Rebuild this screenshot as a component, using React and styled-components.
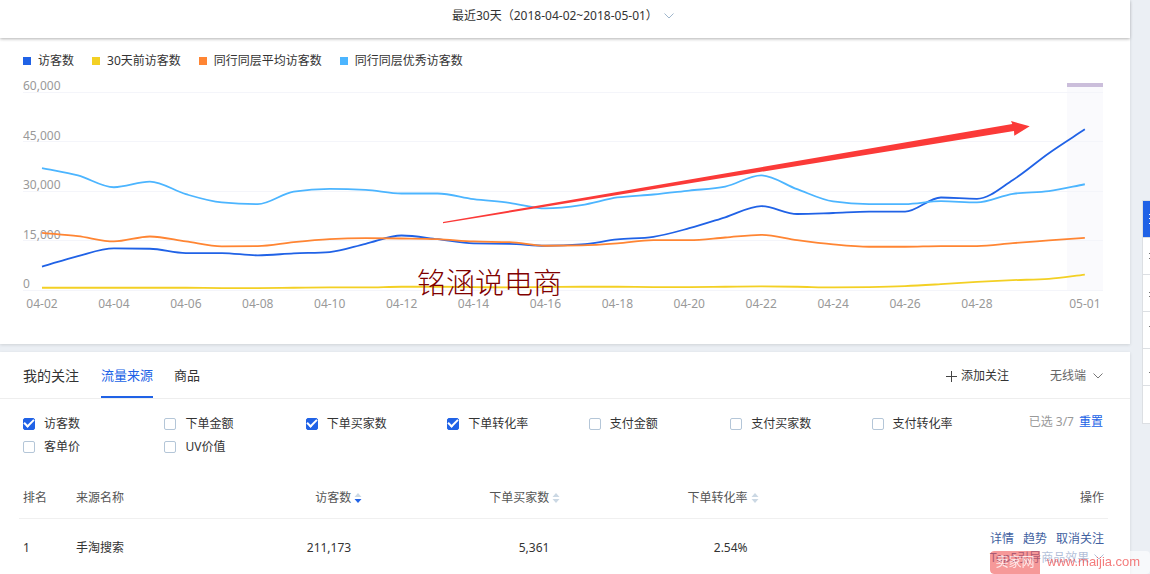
import React, { useState } from "react";
import styled, { createGlobalStyle } from "styled-components";

const GlobalStyle = createGlobalStyle`
    * {
        box-sizing: border-box;
    }

    body {
        margin: 0;
        background-color: #ebeff4;
        color: #333;
        font-family: "Noto Sans", "Noto Sans CJK SC", sans-serif;
        font-size: 12px;
        line-height: 18px;
    }

    button, select, input {
        font: inherit;
        color: inherit;
    }

    button {
        border: 0;
        padding: 0;
        background: none;
        cursor: pointer;
    }
`;

const Page = styled.div`
    display: flex;
    flex-direction: column;
    min-height: 100vh;
    padding-right: 20px;
`;

const TopBar = styled.header`
    display: flex;
    justify-content: center;
    align-items: center;
    height: 38px;
    padding: 0 4px 6px 0;
    background-color: #fff;
    box-shadow: 0 1px 3px rgba(0, 0, 0, 0.3);
    z-index: 1;
`;

const Panel = styled.section`
    background-color: #fff;
    box-shadow: 0 1px 3px rgba(0, 0, 0, 0.12);
`;

const ChartPanel = styled(Panel)`
    position: relative;
    margin-bottom: 8px;
    padding: 14px 0 24px;
`;

const SourcePanel = styled(Panel)`
    flex: 1;
`;

const SelectWrap = styled.label`
    display: flex;
    align-items: center;
    gap: 6px;
    color: ${(props) => (props.$muted ? "#666" : "#333")};
`;

const PlainSelect = styled.select`
    appearance: none;
    border: 0;
    padding: 0;
    background: none;
    cursor: pointer;
`;

const Legend = styled.ul`
    display: flex;
    gap: 18px;
    margin: 0;
    padding: 0 23px;
    list-style: none;
`;

const LegendItem = styled.li`
    display: flex;
    align-items: center;
    gap: 7px;

    &::before {
        content: "";
        width: 8px;
        height: 8px;
        background-color: ${(props) => props.$color};
    }
`;

const ChartSvg = styled.svg`
    display: block;
    width: 100%;
    margin-top: 5px;

    text {
        fill: #999;
        font-size: 12px;
    }
`;

const AuthorMark = styled.div`
    position: absolute;
    left: 37%;
    bottom: 43px;
    margin-left: -1px;
    color: #800000;
    font-family: "Noto Sans CJK SC", sans-serif;
    font-size: 29px;
    font-weight: 300;
    line-height: 40px;
`;

const TabBar = styled.div`
    display: flex;
    align-items: stretch;
    height: 47px;
    padding: 0 27px 0 23px;
    border-bottom: 1px solid #eee;
`;

const PanelTitle = styled.h2`
    margin: 0 22px 0 0;
    font-size: 14px;
    font-weight: 400;
    line-height: 48px;
`;

const Tab = styled.button`
    margin-right: 21px;
    padding-top: 2px;
    border-bottom: 2px solid ${(props) => (props.$active ? "#2062e6" : "transparent")};
    color: ${(props) => (props.$active ? "#2062e6" : "#333")};
    font-size: 13px;
`;

const TabActions = styled.div`
    display: flex;
    align-items: center;
    gap: 41px;
    margin-left: auto;
    padding-top: 2px;
`;

const AddButton = styled.button`
    display: flex;
    align-items: center;
    gap: 4px;
`;

const Filters = styled.div`
    display: flex;
    padding: 13px 27px 0 23px;
`;

const MetricGrid = styled.div`
    flex: 1;
    display: grid;
    grid-template-columns: repeat(7, 1fr);
    grid-auto-rows: 23px;
`;

const MetricLabel = styled.label`
    display: flex;
    align-items: center;
    gap: 9px;
`;

const Checkbox = styled.input`
    appearance: none;
    display: grid;
    place-items: center;
    width: 12px;
    height: 12px;
    margin: 0;
    border: 1px solid #b4c6d8;
    border-radius: 2px;

    &:checked {
        border-color: #2062e6;
        background-color: #2062e6;
    }

    &:checked::after {
        content: "";
        width: 8px;
        height: 4px;
        margin-bottom: 3px;
        border: solid #fff;
        border-width: 0 0 2px 2px;
        transform: rotate(-45deg);
    }
`;

const Selected = styled.div`
    width: 90px;
    color: #999;
    line-height: 20px;
    text-align: right;
`;

const ResetButton = styled.button`
    margin-left: 5px;
    color: #2062e6;
`;

const SourceTable = styled.table`
    width: calc(100% - 41px);
    margin: 18px 22px 0 19px;
    border-collapse: collapse;
    table-layout: fixed;
`;

const HeadCell = styled.th`
    width: ${(props) => props.$width};
    height: 42px;
    padding: 2px ${(props) => (props.$last ? "4px" : "0")} 0 4px;
    border-bottom: 1px solid #f0f0f0;
    color: #555;
    font-weight: 400;
    text-align: ${(props) => props.$align || "left"};
`;

const SortButton = styled.button`
    display: inline-flex;
    align-items: center;
    gap: 3px;
`;

const Cell = styled.td`
    padding: 10px ${(props) => (props.$number ? "11px" : "4px")} 6px 4px;
    text-align: ${(props) => (props.$number ? "right" : "left")};
`;

const RowActions = styled.div`
    display: flex;
    flex-wrap: wrap;
    justify-content: space-between;
    width: 114px;
    margin-left: auto;
    line-height: 19px;
`;

const RowLink = styled.a`
    display: flex;
    align-items: center;
    gap: 5px;
    color: #3f5f9f;
    text-decoration: none;
    white-space: nowrap;
`;

const SideRail = styled.nav`
    position: fixed;
    top: 200px;
    right: -30px;
    width: 38px;
    border: 1px solid #dcdfe3;
    border-right: 0;
`;

const RailButton = styled.button`
    display: flex;
    align-items: center;
    width: 100%;
    height: 37px;
    padding-left: 6px;
    border-bottom: 1px solid #dcdfe3;
    background-color: ${(props) => (props.$active ? "#2062e6" : "#fff")};
    color: ${(props) => (props.$active ? "#fff" : "#777")};

    &:last-child {
        border-bottom: 0;
    }
`;

const SiteMark = styled.div`
    position: fixed;
    right: 0;
    bottom: 0;
    display: flex;
    width: 160px;
    height: 23px;
    border-radius: 4px;
    overflow: hidden;
    color: rgba(240, 80, 80, 0.75);
    font-family: "Liberation Sans", "Noto Sans CJK SC", sans-serif;
    font-size: 13px;
    line-height: 22px;
`;

const SiteName = styled.span`
    width: 50px;
    border-radius: 4px 0 0 4px;
    background-color: rgba(240, 85, 85, 0.6);
    color: rgba(255, 255, 255, 0.8);
    text-align: center;
`;

const SiteUrl = styled.span`
    flex: 1;
    padding-left: 7px;
    background-color: rgba(255, 255, 255, 0.6);
`;

const series = [
    {
        name: "访客数",
        color: "#2062e6",
        data: [
            7200, 10400, 12700, 12600, 11300, 11300, 10600, 11200, 11600, 14100,
            16600, 15500, 14200, 14100, 13500, 13900, 15400, 16200, 18800, 22100,
            25500, 23100, 23400, 23800, 23800, 28100, 27700, 33400, 41500, 48700,
        ],
    },
    {
        name: "30天前访客数",
        color: "#f3d024",
        data: [
            800, 800, 800, 800, 800, 700, 700, 800, 900, 900,
            1100, 1100, 1000, 900, 1000, 1100, 1100, 1000, 1000, 1100,
            1200, 1100, 900, 1000, 1300, 1900, 2600, 3100, 3500, 4800,
        ],
    },
    {
        name: "同行同层平均访客数",
        color: "#ff8533",
        data: [
            17400, 16400, 14800, 16300, 14800, 13300, 13400, 14600, 15500, 15800,
            15700, 15500, 14800, 14600, 13500, 13600, 14200, 15200, 15200, 16000,
            16800, 15200, 13900, 13200, 13200, 13400, 13400, 14300, 15100, 15900,
        ],
    },
    {
        name: "同行同层优秀访客数",
        color: "#4cb5ff",
        data: [
            37000, 34800, 31200, 32900, 29100, 26600, 26100, 29900, 30700, 30400,
            29300, 29300, 27600, 26500, 24800, 25800, 28100, 29000, 30200, 31400,
            34800, 30600, 26900, 26100, 26100, 27000, 26600, 29200, 30000, 32100,
        ],
    },
];

const yTicks = [60000, 45000, 30000, 15000, 0];

const xTicks = [
    "04-02", "04-04", "04-06", "04-08", "04-10", "04-12", "04-14",
    "04-16", "04-18", "04-20", "04-22", "04-24", "04-26", "04-28",
].map((label, i) => ({ label, index: i * 2 })).concat({ label: "05-01", index: 29 });

const metrics = [
    "访客数", "下单金额", "下单买家数", "下单转化率", "支付金额",
    "支付买家数", "支付转化率", "客单价", "UV价值",
];

const railIcons = [
    "M0 2.5h8M0 6.5h8M0 11.5h8M3.5 1v12",
    "M0 4.5h8M0 9.5h8M3.5 1v12",
    "M0 6.5h6M0 10.5h6M4.5 2v10",
    "M0 3.5h8M5.5 4v8",
    "M0 12.5h8M5.5 3v9",
    "",
];

const STEP = 35.96;
const xPos = (i) => 42 + i * STEP;
const yPos = (value) => 215.4 - (value / 60000) * 198.4;

// monotone cubic, so flat stretches do not overshoot
function linePath(data) {
    const ys = data.map(yPos);
    const slopes = ys.slice(1).map((y, i) => y - ys[i]);
    const tangents = ys.map((_, i) => {
        if (i === 0) return slopes[0];
        if (i === ys.length - 1) return slopes[i - 1];
        const a = slopes[i - 1];
        const b = slopes[i];
        if (a * b <= 0) return 0;
        return Math.sign(a) * Math.min(Math.abs(a), Math.abs(b), Math.abs(a + b) / 4) * 2;
    });

    let d = `M${xPos(0)},${ys[0]}`;
    for (let i = 1; i < ys.length; i++) {
        d += `C${xPos(i - 1) + STEP / 3},${ys[i - 1] + tangents[i - 1] / 3}`;
        d += ` ${xPos(i) - STEP / 3},${ys[i] - tangents[i] / 3} ${xPos(i)},${ys[i]}`;
    }
    return d;
}

function Chevron({ color }) {
    return (
        <svg width="10" height="6" viewBox="0 0 10 6" fill="none" stroke={color} aria-hidden="true">
            <path d="M0.5 0.5L5 5L9.5 0.5" />
        </svg>
    );
}

function SortIcon({ active }) {
    return (
        <svg width="8" height="10" viewBox="0 0 8 10" aria-hidden="true">
            <path d="M0.5 4L4 0L7.5 4Z" fill="#cbd8e4" />
            <path d="M0.5 6L4 10L7.5 6Z" fill={active ? "#2062e6" : "#cbd8e4"} />
        </svg>
    );
}

function TrendChart() {
    return (
        <ChartSvg viewBox="0 0 1130 245" role="img" aria-label="访客数">
            <rect x="1067" y="8" width="36" height="207" fill="#fafafd" />
            {yTicks.map((tick) => (
                <line
                    key={tick}
                    x1="23"
                    x2="1103"
                    y1={Math.floor(yPos(tick)) + 0.5}
                    y2={Math.floor(yPos(tick)) + 0.5}
                    stroke="#f4f5fa"
                />
            ))}
            <rect x="1067" y="8" width="36" height="4" fill="#cbbedb" />
            {yTicks.map((tick) => (
                <text key={tick} x="23" y={Math.round(yPos(tick)) - 2}>
                    {tick.toLocaleString("en-US")}
                </text>
            ))}
            {xTicks.map(({ label, index }) => (
                <text key={label} x={xPos(index)} y="233" textAnchor="middle">
                    {label}
                </text>
            ))}
            {series.map(({ name, color, data }) => (
                <path key={name} d={linePath(data)} fill="none" stroke={color} strokeWidth="1.8" />
            ))}
            <path
                d="M443 147L1012.3 49L1011 46L1029.7 51.3L1014.3 60.7L1014 56L443 148.2Z"
                fill="#fb3a38"
            />
        </ChartSvg>
    );
}

function App() {
    const [tab, setTab] = useState("流量来源");
    const [checked, setChecked] = useState(["访客数", "下单买家数", "下单转化率"]);

    const toggle = (name) =>
        setChecked(
            checked.includes(name) ? checked.filter((item) => item !== name) : [...checked, name]
        );

    return (
        <>
            <GlobalStyle />
            <Page>
                <TopBar>
                    <SelectWrap>
                        <PlainSelect aria-label="最近30天">
                            <option>最近30天（2018-04-02~2018-05-01）</option>
                        </PlainSelect>
                        <Chevron color="#9fb6cc" />
                    </SelectWrap>
                </TopBar>
                <ChartPanel>
                    <Legend>
                        {series.map(({ name, color }) => (
                            <LegendItem key={name} $color={color}>{name}</LegendItem>
                        ))}
                    </Legend>
                    <TrendChart />
                    <AuthorMark>铭涵说电商</AuthorMark>
                </ChartPanel>
                <SourcePanel>
                    <TabBar>
                        <PanelTitle>我的关注</PanelTitle>
                        {["流量来源", "商品"].map((name) => (
                            <Tab key={name} $active={tab === name} onClick={() => setTab(name)}>
                                {name}
                            </Tab>
                        ))}
                        <TabActions>
                            <AddButton>
                                <svg width="11" height="11" viewBox="0 0 11 11" stroke="#444" aria-hidden="true">
                                    <path d="M0 5.5H11M5.5 0V11" />
                                </svg>
                                添加关注
                            </AddButton>
                            <SelectWrap $muted>
                                <PlainSelect aria-label="无线端">
                                    <option>无线端</option>
                                </PlainSelect>
                                <Chevron color="#777" />
                            </SelectWrap>
                        </TabActions>
                    </TabBar>
                    <Filters>
                        <MetricGrid>
                            {metrics.map((name) => (
                                <MetricLabel key={name}>
                                    <Checkbox
                                        type="checkbox"
                                        checked={checked.includes(name)}
                                        onChange={() => toggle(name)}
                                    />
                                    {name}
                                </MetricLabel>
                            ))}
                        </MetricGrid>
                        <Selected>
                            已选 {checked.length}/7
                            <ResetButton onClick={() => setChecked([])}>重置</ResetButton>
                        </Selected>
                    </Filters>
                    <SourceTable>
                        <thead>
                            <tr>
                                <HeadCell $width="53px">排名</HeadCell>
                                <HeadCell $width="92px">来源名称</HeadCell>
                                {["访客数", "下单买家数", "下单转化率"].map((name, index) => (
                                    <HeadCell key={name} $width="18.2%" $align="right">
                                        <SortButton>
                                            {name}
                                            <SortIcon active={index === 0} />
                                        </SortButton>
                                    </HeadCell>
                                ))}
                                <HeadCell $align="right" $last>操作</HeadCell>
                            </tr>
                        </thead>
                        <tbody>
                            <tr>
                                <Cell>1</Cell>
                                <Cell>手淘搜索</Cell>
                                <Cell $number>211,173</Cell>
                                <Cell $number>5,361</Cell>
                                <Cell $number>2.54%</Cell>
                                <Cell>
                                    <RowActions>
                                        <RowLink href="#detail">详情</RowLink>
                                        <RowLink href="#trend">趋势</RowLink>
                                        <RowLink href="#unfollow">取消关注</RowLink>
                                        <RowLink href="#top5">
                                            Top5引导商品效果
                                            <Chevron color="#3f5f9f" />
                                        </RowLink>
                                    </RowActions>
                                </Cell>
                            </tr>
                        </tbody>
                    </SourceTable>
                </SourcePanel>
            </Page>
            <SideRail>
                {railIcons.map((d, index) => (
                    <RailButton key={index} $active={index === 0}>
                        <svg width="14" height="14" viewBox="0 0 14 14" stroke="currentColor" fill="none">
                            <path d={d} />
                        </svg>
                    </RailButton>
                ))}
            </SideRail>
            <SiteMark>
                <SiteName>卖家网</SiteName>
                <SiteUrl>www.maijia.com</SiteUrl>
            </SiteMark>
        </>
    );
}

export default App;
